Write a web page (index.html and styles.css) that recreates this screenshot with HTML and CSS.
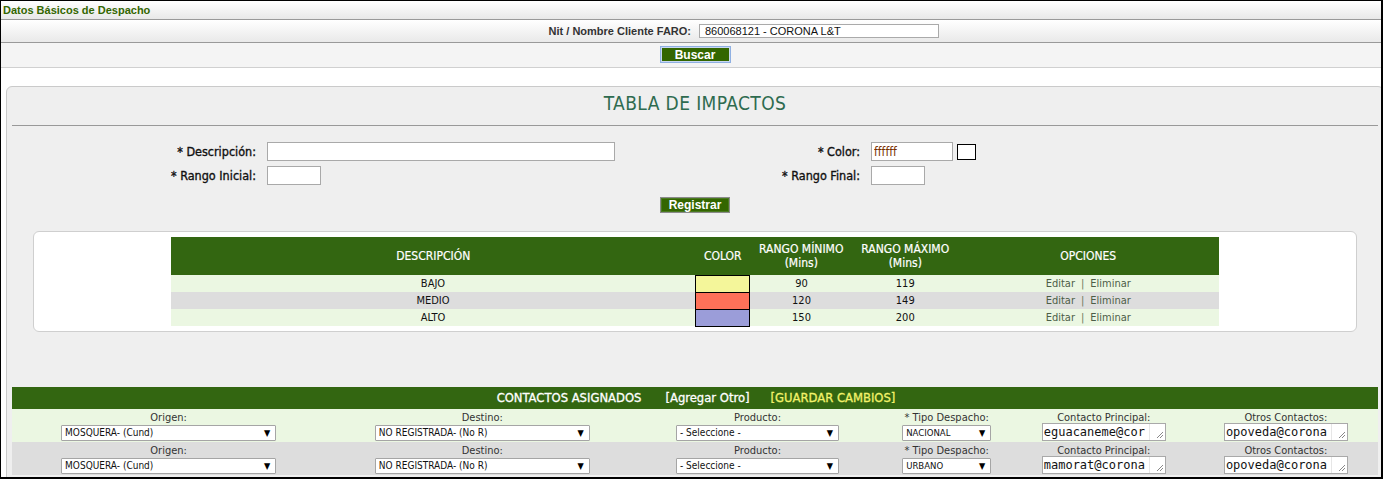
FILE: index.html
```html
<!DOCTYPE html>
<html lang="es">
<head>
<meta charset="utf-8">
<title>Datos Básicos de Despacho</title>
<link rel="stylesheet" href="styles.css">
</head>
<body>
<div class="frame">
  <div class="page">
    <div class="titlebar">Datos Básicos de Despacho</div>
    <div class="nitrow">
      <label class="nitlabel" for="nit">Nit / Nombre Cliente FARO:</label>
      <div class="nitcell"><input id="nit" class="nitinput" type="text" value="860068121 - CORONA L&amp;T"></div>
    </div>
    <div class="btnrow"><button class="btn btn-focus" type="button">Buscar</button></div>

    <div class="panel">
      <h2 class="ptitle">TABLA DE IMPACTOS</h2>

      <div class="form">
        <label class="flabel">* Descripción:</label>
        <div class="fcell"><input class="in in-desc" type="text"></div>
        <label class="flabel">* Color:</label>
        <div class="fcell"><input class="in in-color" type="text" value="ffffff"><span class="swatch"></span></div>
        <label class="flabel">* Rango Inicial:</label>
        <div class="fcell"><input class="in in-num" type="text"></div>
        <label class="flabel">* Rango Final:</label>
        <div class="fcell"><input class="in in-num" type="text"></div>
      </div>

      <div class="regrow"><button class="btn btn-reg" type="button">Registrar</button></div>

      <div class="tablebox">
        <table class="imp">
          <colgroup>
            <col class="c-desc"><col class="c-color"><col class="c-min"><col class="c-max"><col class="c-opt">
          </colgroup>
          <thead>
            <tr><th>DESCRIPCIÓN</th><th>COLOR</th><th>RANGO MÍNIMO<br>(Mins)</th><th>RANGO MÁXIMO<br>(Mins)</th><th>OPCIONES</th></tr>
          </thead>
          <tbody>
            <tr class="r-a"><td>BAJO</td><td class="sw" style="background:#f4f69a"></td><td>90</td><td>119</td><td class="opt"><a>Editar</a><span class="sep">|</span><a>Eliminar</a></td></tr>
            <tr class="r-b"><td>MEDIO</td><td class="sw" style="background:#fe7159"></td><td>120</td><td>149</td><td class="opt"><a>Editar</a><span class="sep">|</span><a>Eliminar</a></td></tr>
            <tr class="r-a"><td>ALTO</td><td class="sw" style="background:#9b9dd9"></td><td>150</td><td>200</td><td class="opt"><a>Editar</a><span class="sep">|</span><a>Eliminar</a></td></tr>
          </tbody>
        </table>
      </div>

      <table class="contacts">
        <colgroup>
          <col class="k1"><col class="k2"><col class="k3"><col class="k4"><col class="k5"><col class="k6">
        </colgroup>
        <thead>
          <tr><th colspan="6"><span class="ctitle">CONTACTOS ASIGNADOS</span><span class="add">[Agregar Otro]</span><span class="save">[GUARDAR CAMBIOS]</span></th></tr>
        </thead>
        <tbody>
          <tr class="r-a">
            <td><span class="cl">Origen:</span><span class="sel w-org">MOSQUERA- (Cund)</span></td>
            <td><span class="cl">Destino:</span><span class="sel w-org">NO REGISTRADA- (No R)</span></td>
            <td><span class="cl">Producto:</span><span class="sel w-prod">- Seleccione -</span></td>
            <td><span class="cl">* Tipo Despacho:</span><span class="sel w-tipo">NACIONAL</span></td>
            <td><span class="cl">Contacto Principal:</span><span class="ta"><span class="tt">eguacaneme@cor</span><span class="grip"><svg width="8" height="8" viewBox="0 0 8 8"><path d="M7 1L1 7M7 4L4 7" stroke="#888" stroke-width="1"/></svg></span></span></td>
            <td class="last"><span class="cl">Otros Contactos:</span><span class="ta"><span class="tt">opoveda@corona</span><span class="grip"><svg width="8" height="8" viewBox="0 0 8 8"><path d="M7 1L1 7M7 4L4 7" stroke="#888" stroke-width="1"/></svg></span></span></td>
          </tr>
          <tr class="r-b">
            <td><span class="cl">Origen:</span><span class="sel w-org">MOSQUERA- (Cund)</span></td>
            <td><span class="cl">Destino:</span><span class="sel w-org">NO REGISTRADA- (No R)</span></td>
            <td><span class="cl">Producto:</span><span class="sel w-prod">- Seleccione -</span></td>
            <td><span class="cl">* Tipo Despacho:</span><span class="sel w-tipo">URBANO</span></td>
            <td><span class="cl">Contacto Principal:</span><span class="ta"><span class="tt">mamorat@corona</span><span class="grip"><svg width="8" height="8" viewBox="0 0 8 8"><path d="M7 1L1 7M7 4L4 7" stroke="#888" stroke-width="1"/></svg></span></span></td>
            <td class="last"><span class="cl">Otros Contactos:</span><span class="ta"><span class="tt">opoveda@corona</span><span class="grip"><svg width="8" height="8" viewBox="0 0 8 8"><path d="M7 1L1 7M7 4L4 7" stroke="#888" stroke-width="1"/></svg></span></span></td>
          </tr>
        </tbody>
      </table>
    </div>
  </div>
</div>
</body>
</html>
```
FILE: styles.css
```css
* { box-sizing: border-box; }
html, body { margin: 0; padding: 0; background: #fff; }

.frame {
  width: 1383px;
  height: 479px;
  border-style: solid;
  border-color: #000;
  border-width: 1px 2px 2px 1px;
  overflow: hidden;
  font-family: "Liberation Sans", Arial, sans-serif;
}
.page { width: 1388px; }

.titlebar {
  height: 19px;
  line-height: 18px;
  padding-left: 2px;
  border-bottom: 1px solid #999;
  background: linear-gradient(#ffffff, #e8e8e8);
  font-size: 11px;
  font-weight: bold;
  color: #336600;
}

.nitrow {
  display: grid;
  grid-template-columns: 1fr 1fr;
  height: 23px;
  border-bottom: 1px solid #999;
  background: linear-gradient(#ffffff, #e9e9e9);
  align-items: center;
}
.nitlabel {
  text-align: right;
  padding-right: 4px;
  font-size: 11px;
  font-weight: bold;
  color: #333;
}
.nitcell { padding-left: 4px; display: flex; }
.nitinput {
  width: 240px;
  height: 14px;
  margin: 0;
  padding: 0 0 0 5px;
  border: 1px solid #aaa;
  font: 11px "Liberation Sans", Arial, sans-serif;
  color: #111;
  background: #fff;
}

.btnrow {
  height: 25px;
  border-bottom: 1px solid #d0d0d0;
  background: #f4f4f4;
  display: flex;
  justify-content: center;
  padding-top: 3px;
}
.btn {
  margin: 0;
  padding: 0;
  background: #336600;
  color: #fff;
  font: bold 12px "Liberation Sans", Arial, sans-serif;
  line-height: 14px;
  cursor: pointer;
}
.btn-focus {
  width: 71px;
  height: 17px;
  border: 1px solid #8fb0e2;
  box-shadow: inset 0 0 0 1px #c8d8f0;
}
.btn-reg {
  width: 70px;
  height: 16px;
  border: 1px solid #8a8a8a;
  box-shadow: inset 0 0 0 1px #4a7a20;
}

.panel {
  margin: 18px 5px 0;
  border: 1px solid #cacaca;
  border-radius: 6px;
  background: #efefef;
  padding: 0 5px 40px;
  font-family: "DejaVu Sans Condensed", "DejaVu Sans", sans-serif;
  font-stretch: condensed;
}

.ptitle {
  margin: 0;
  height: 39px;
  line-height: 33px;
  border-bottom: 1px solid #999;
  text-align: center;
  font-size: 19px;
  letter-spacing: 0.4px;
  font-weight: normal;
  color: #2e6b4f;
}

.form {
  margin-top: 16px;
  display: grid;
  grid-template-columns: 247px 353px 235px 1fr;
  column-gap: 8px;
  row-gap: 5px;
  align-items: center;
}
.flabel {
  text-align: right;
  padding-right: 3px;
  font-size: 12.5px;
  font-weight: normal;
  color: #111;
  -webkit-text-stroke: 0.35px #111;
}
.fcell { display: flex; align-items: center; gap: 4px; }
.in {
  height: 19px;
  margin: 0;
  padding: 0 2px;
  border: 1px solid #a9a9a9;
  background: #fff;
  font: 12px "DejaVu Sans Condensed", "DejaVu Sans", sans-serif;
  font-stretch: condensed;
}
.in-desc { width: 348px; }
.in-color { width: 82px; color: #7a3000; }
.in-num { width: 54px; }
.swatch {
  width: 19px;
  height: 16px;
  border: 1px solid #000;
  background: #fff;
}

.regrow {
  margin-top: 12px;
  display: flex;
  justify-content: center;
}

.tablebox {
  margin: 18px 21px 0;
  padding: 5px 0 4px;
  border: 1px solid #cfcfcf;
  border-radius: 6px;
  background: #fff;
}
.imp {
  width: 1048px;
  margin: 0 auto;
  border-collapse: collapse;
  table-layout: fixed;
  font-size: 11px;
  color: #111;
}
.c-desc { width: 525px; }
.c-color { width: 54px; }
.c-min { width: 103px; }
.c-max { width: 105px; }
.c-opt { width: 261px; }
.imp th {
  height: 38px;
  padding: 0;
  background: #336611;
  color: #fff;
  font-weight: normal;
  font-size: 12px;
  line-height: 14px;
  text-align: center;
  -webkit-text-stroke: 0.2px #fff;
}
.imp td {
  height: 17px;
  padding: 0;
  text-align: center;
  line-height: 15px;
}
.imp td.sw { border: 1px solid #000; }
.r-a { background: #ebf7e2; }
.r-b { background: #dddddd; }
.opt { color: #4d5e48; }
.opt .sep { margin: 0 6px; color: #6a7a60; }

.contacts {
  width: 100%;
  margin-top: 55px;
  border-collapse: collapse;
  table-layout: fixed;
  font-size: 11px;
  color: #333;
}
.k1 { width: 313px; }
.k2 { width: 314px; }
.k3 { width: 236px; }
.k4 { width: 142px; }
.k5 { width: 172px; }
.k6 { width: 188px; }
.contacts th {
  height: 22px;
  padding: 0 0 0 2px;
  background: #336611;
  color: #fff;
  font-size: 12.9px;
  font-weight: normal;
  text-align: center;
  -webkit-text-stroke: 0.3px #fff;
}
.contacts th .add { margin-left: 24px; }
.contacts th .save { margin-left: 21px; color: #f2f26a; -webkit-text-stroke: 0.3px #f2f26a; }
.contacts td {
  height: 33px;
  padding: 3px 0 0;
  text-align: center;
  vertical-align: top;
}
.contacts td.last { padding-left: 4px; }
.cl { display: block; line-height: 12px; }
.sel {
  position: relative;
  display: block;
  margin: 1px auto 0;
  height: 16px;
  padding: 0 0 0 3px;
  border: 1px solid #a5a5a5;
  border-radius: 1px;
  background: #fff;
  font-size: 10px;
  line-height: 14px;
  color: #111;
  text-align: left;
  white-space: nowrap;
  overflow: hidden;
}
.sel::after {
  content: "\25BC";
  position: absolute;
  right: 5px;
  top: 0;
  font-size: 9px;
  line-height: 14px;
  color: #000;
}
.w-org { width: 215px; }
.w-prod { width: 163px; }
.w-tipo { width: 89px; font-size: 9.5px; }
.ta {
  display: flex;
  margin: -1px auto 0;
  width: 124px;
  height: 18px;
  border: 1px solid #a9a9a9;
  background: #fff;
}
.tt {
  flex: 1;
  white-space: nowrap;
  text-align: left;
  padding-left: 1px;
  font: 12px/16px "DejaVu Sans Mono", "Liberation Mono", monospace;
  color: #111;
}
.grip {
  width: 16px;
  border-left: 1px solid #e6e6e6;
  display: flex;
  align-items: flex-end;
  justify-content: flex-end;
  padding: 0 1px 1px 0;
}
.grip svg { display: block; }
```
